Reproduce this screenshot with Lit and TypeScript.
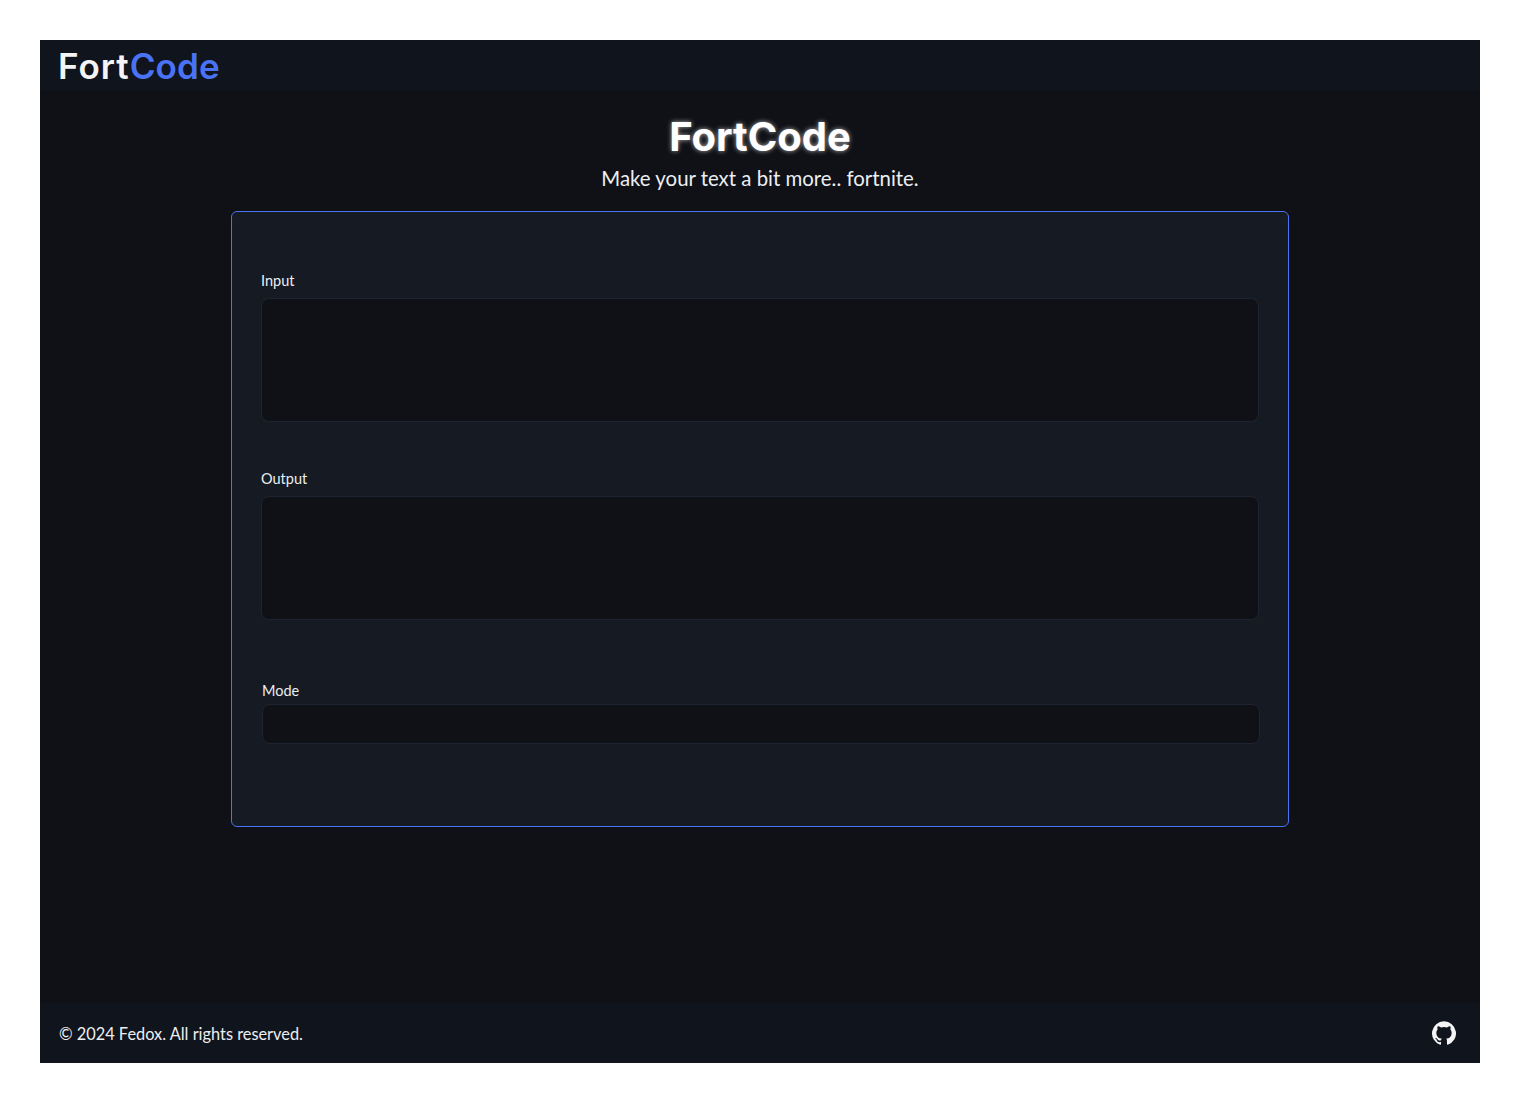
import { LitElement, html, css } from "lit";
import { customElement } from "lit/decorators.js";

@customElement("app-root")
export class AppRoot extends LitElement {
  static styles = css`
    :host { display: block; padding: 40px; background: #fff; font-family: "Lato", "Noto Sans", sans-serif; color: #f4f4f5; }
    .shell { display: flex; flex-direction: column; height: 1023px; background: #0f1116; }
    header { height: 50px; flex: none; background: #10141d; padding: 0 18px; display: flex; align-items: center; box-sizing: border-box; }
    .logo { font-family: "Inter", sans-serif; font-size: 35px; font-weight: 600; line-height: 50px; letter-spacing: 1px; color: #f4f4f5; padding-top: 1px; }
    .logo span { color: #4a72f5; letter-spacing: 0.1px; }
    main { flex: 1; display: flex; flex-direction: column; align-items: center; padding-top: 25px; }
    h1 { margin: 0; font-family: "Inter", sans-serif; font-size: 40px; font-weight: 700; line-height: 44px; letter-spacing: 0; color: #fff; text-shadow: 0 0 5px rgba(255,255,255,.65); }
    .sub { margin: 5px 0 0; font-size: 20.4px; line-height: 28px; color: #eceef1; }
    .card { box-sizing: border-box; width: 1058px; height: 616px; margin-top: 19px; border: 1px solid #4a72f5; border-radius: 6px; background: #151a23; padding: 61px 29px 0; }
    .field { display: flex; flex-direction: column; }
    .field + .field { margin-top: 49px; }
    label { font-size: 14.5px; line-height: 16px; color: #eceef1; margin-bottom: 9px; }
    .box { box-sizing: border-box; height: 124px; border: 1px solid #1f2530; border-radius: 8px; background: #0f1116; }
    .field + .field.mode { margin: 62px -1px 0 1px; }
    .mode .box { height: 40px; }
    .mode label { line-height: 18px; margin-bottom: 4px; }
    footer { height: 60px; flex: none; background: #10141d; display: flex; align-items: center; justify-content: space-between; padding: 0 24px 0 19px; box-sizing: border-box; font-size: 16.35px; color: #eceef1; }
    footer svg { width: 24px; height: 24px; fill: #f4f4f5; display: block; }
  `;

  render() {
    return html`
      <div class="shell">
        <header><div class="logo">Fort<span>Code</span></div></header>
        <main>
          <h1>FortCode</h1>
          <p class="sub">Make your text a bit more.. fortnite.</p>
          <section class="card">
            <div class="field"><label>Input</label><div class="box"></div></div>
            <div class="field"><label>Output</label><div class="box"></div></div>
            <div class="field mode"><label>Mode</label><div class="box"></div></div>
          </section>
        </main>
        <footer>
          <span>© 2024 Fedox. All rights reserved.</span>
          <svg viewBox="0 0 24 24" aria-label="GitHub"><path d="M12 .3a12 12 0 0 0-3.8 23.38c.6.12.83-.26.83-.57v-2.02c-3.34.72-4.04-1.61-4.04-1.61-.55-1.39-1.34-1.76-1.34-1.76-1.08-.74.09-.73.09-.73 1.2.09 1.84 1.24 1.84 1.24 1.07 1.83 2.8 1.3 3.49 1 .1-.78.42-1.31.76-1.61-2.67-.3-5.47-1.33-5.47-5.93 0-1.31.47-2.38 1.24-3.22-.14-.3-.54-1.52.1-3.18 0 0 1-.32 3.3 1.23a11.5 11.5 0 0 1 6 0c2.28-1.55 3.29-1.23 3.29-1.23.64 1.66.24 2.88.12 3.18a4.65 4.65 0 0 1 1.23 3.22c0 4.61-2.8 5.63-5.48 5.92.42.36.81 1.1.81 2.22v3.29c0 .31.2.69.82.57A12 12 0 0 0 12 .3"/></svg>
        </footer>
      </div>
    `;
  }
}
